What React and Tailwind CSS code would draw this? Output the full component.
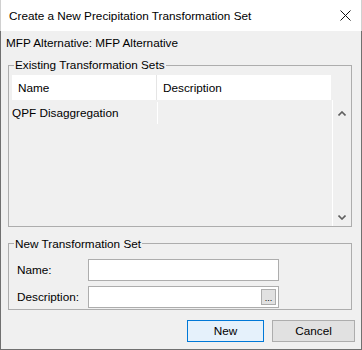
export default function App() {
  const font = { fontFamily: '"Liberation Sans", Arial, sans-serif' };
  return (
    <div className="w-[362px] h-[350px] flex flex-col text-[11.75px] text-black" style={font}>
      <div className="h-[31px] shrink-0 bg-white border-x border-[#d0d0d0] flex items-center pl-[8px] pr-[10px]">
        <span className="flex-1 leading-[14px]">Create a New Precipitation Transformation Set</span>
        <svg width="11" height="11" viewBox="0 0 11 11">
          <path d="M0.5 0.5 L10.5 10.5 M10.5 0.5 L0.5 10.5" stroke="#111" strokeWidth="1" />
        </svg>
      </div>
      <div className="flex-1 flex flex-col bg-[#f0f0f0] border-x border-b border-[#707070]">
        <div className="mt-[5px] pl-[5px] leading-[14px]">MFP Alternative: MFP Alternative</div>
        <fieldset className="mt-[8px] ml-[7px] w-[344px] border border-[#adadad] pl-[3px] pr-0 pb-0">
          <legend className="ml-[2px] px-[1px] leading-[14px]">Existing Transformation Sets</legend>
          <div className="mt-[3px] flex h-[151px]">
            <div className="w-[320px] flex flex-col">
              <div className="w-[319px] h-[25px] bg-white flex items-center">
                <div className="w-[144px] pl-[6px]">Name</div>
                <div className="w-[1px] h-full bg-[#e5e5e5]" />
                <div className="pl-[6px]">Description</div>
              </div>
              <div className="mt-[2px] flex h-[22px] items-center">
                <div className="w-[145px]">QPF Disaggregation</div>
                <div className="w-[1px] h-full bg-white" />
              </div>
            </div>
            <div className="flex-1 flex flex-col justify-between items-center border-l border-white mt-[25px] pb-[6px] pt-[11px]">
              <svg width="8" height="5" viewBox="0 0 8 5">
                <path d="M0.5 4.5 L4 1 L7.5 4.5" stroke="#606060" strokeWidth="1.6" fill="none" />
              </svg>
              <svg width="8" height="5" viewBox="0 0 8 5">
                <path d="M0.5 0.5 L4 4 L7.5 0.5" stroke="#606060" strokeWidth="1.6" fill="none" />
              </svg>
            </div>
          </div>
        </fieldset>
        <fieldset className="mt-[9px] ml-[7px] w-[344px] border border-[#adadad] pl-[3px] pr-0 pb-[1px]">
          <legend className="ml-[2px] px-[1px] leading-[14px] translate-y-[1px]">New Transformation Set</legend>
          <div className="mt-[9px] grid grid-cols-[76px_191px] gap-y-[5px] items-center">
            <div className="pl-[5px]">Name:</div>
            <div className="h-[22px] bg-white border border-[#adadad]" />
            <div className="pl-[5px]">Description:</div>
            <div className="h-[22px] bg-white border border-[#adadad] flex items-center justify-end pr-[2px]">
              <div className="w-[15px] h-[16px] bg-[#e1e1e1] border border-[#adadad] flex items-end justify-center pb-[1px] text-[9px] leading-[9px]">...</div>
            </div>
          </div>
        </fieldset>
        <div className="mt-[10px] flex justify-end gap-[8px] pr-[6px]">
          <button className="w-[77px] h-[22px] bg-[#e5f1fb] border border-[#0078d7] leading-[14px]">New</button>
          <button className="w-[83px] h-[22px] bg-[#e1e1e1] border border-[#adadad] leading-[14px]">Cancel</button>
        </div>
      </div>
    </div>
  );
}
